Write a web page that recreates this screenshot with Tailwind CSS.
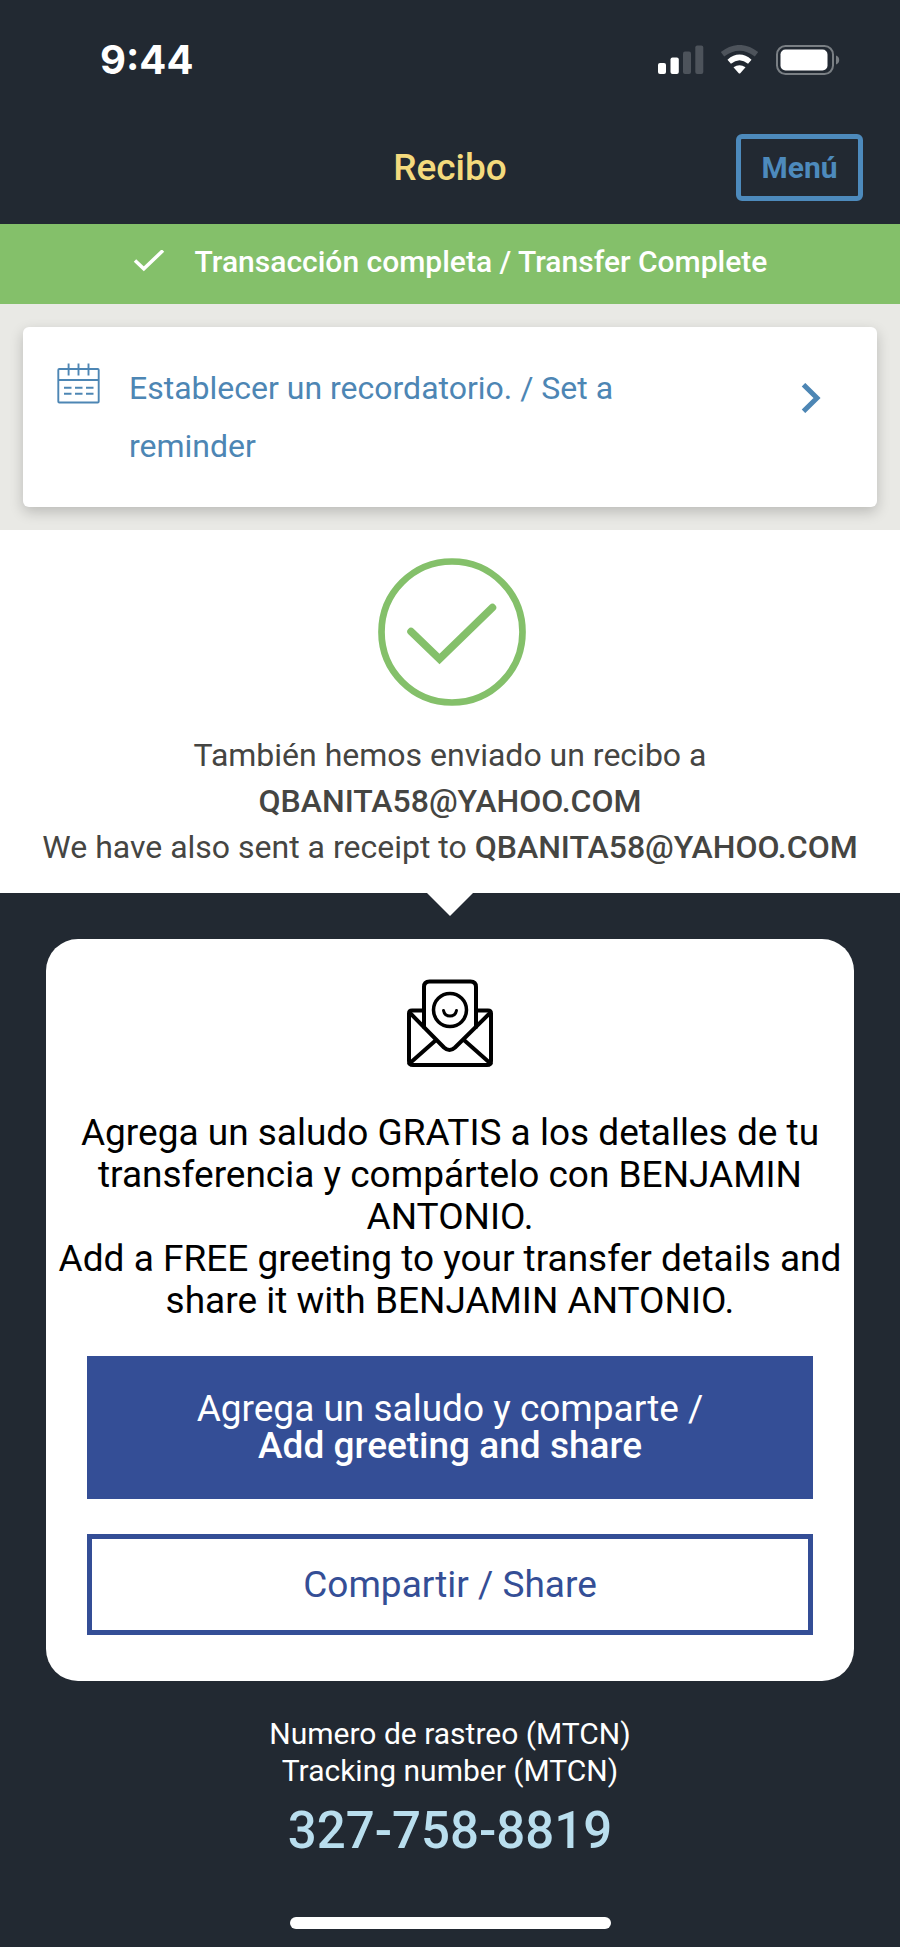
<!DOCTYPE html>
<html lang="es">
<head>
<meta charset="utf-8">
<meta name="viewport" content="width=device-width, initial-scale=1">
<title>Recibo</title>
<script src="https://cdn.jsdelivr.net/npm/@tailwindcss/browser@4"></script>
</head>
<body class="flex min-h-screen flex-col bg-[#222932] font-['Roboto','Liberation_Sans',sans-serif] text-white">
  <!-- Status bar -->
  <div class="flex h-[120px] items-center justify-between pr-[60px] pl-[100px]">
    <span class="font-['Inter','Liberation_Sans',sans-serif] text-[40px] leading-[46px] font-bold">9:44</span>
    <div class="flex items-center">
      <svg class="h-[30px] w-[182px]" viewBox="0 0 182 30" fill="#fff" aria-hidden="true">
        <rect x="0" y="18" width="8" height="11" rx="2"/>
        <rect x="12.500" y="12.500" width="8.300" height="16.500" rx="2"/>
        <rect x="25" y="6.500" width="8" height="22.500" rx="2" fill="#4d535b"/>
        <rect x="37.300" y="0.500" width="8" height="28.500" rx="2" fill="#4d535b"/>
        <path d="M64.500 9.300Q81.500-3.700 98.500 9.300" fill="none" stroke="#4d535b" stroke-width="5.600"/>
        <path d="M71.200 16.700Q81.500 8 91.800 16.700" fill="none" stroke="#fff" stroke-width="5.400"/>
        <path d="M75.500 22.300Q81.500 18 87.500 22.300L82.500 28Q81.500 29 80.500 28Z"/>
        <rect x="119" y="1" width="56" height="28" rx="8.500" fill="none" stroke="#7a7f84" stroke-width="2"/>
        <rect x="122.500" y="4.500" width="47" height="21" rx="5"/>
        <path d="M178 10.500C182.300 12 182.300 18 178 19.500Z" fill="#7a7f84"/>
      </svg>
    </div>
  </div>

  <!-- Title bar -->
  <header class="grid h-[104px] grid-cols-[1fr_auto_1fr] items-start px-[37px] pt-[14px]">
    <span></span>
    <h1 class="pt-3 text-[37px] leading-[44px] font-medium text-[#f4da7d]">Recibo</h1>
    <button type="button" class="h-[67px] w-[127px] justify-self-end rounded-md border-5 border-[#4d8abc] text-[30px] leading-[36px] font-bold text-[#4d8abc]">Menú</button>
  </header>

  <!-- Completion banner -->
  <div class="flex h-20 items-center justify-center gap-[30px] bg-[#84c06a] pb-1 text-[30px] leading-[36px] font-medium">
    <svg class="h-[24px] w-[32px]" viewBox="0 0 32 24" fill="none" stroke="#fff" stroke-width="3.500" aria-hidden="true"><path d="M2 10.500L10.800 18.800L30 0.500"/></svg>
    <span>Transacción completa / Transfer Complete</span>
  </div>

  <!-- Reminder card -->
  <div class="bg-[#e9e9e5] p-[23px]">
    <a href="#" class="flex rounded-md bg-white py-8 pr-14 pl-[34px] text-[#4d86b4] shadow-[0_5px_14px_rgba(0,0,0,0.2)]">
      <svg class="mt-1 h-[42px] w-[43px] shrink-0" viewBox="0 0 43 42" fill="none" stroke="#4d86b4" stroke-width="1.900" aria-hidden="true">
        <rect x="1.300" y="6" width="40.400" height="33.500" rx="1"/>
        <path d="M1.300 17H41.700M11.600 0.500V12.500M21.500 0.500V12.500M31.500 0.500V12.500"/>
        <path d="M7 24.700H14.500M18 24.700H25.500M29 24.700H36.500M7 30.700H14.500M18 30.700H25.500M29 30.700H36.500"/>
      </svg>
      <span class="ml-[29px] flex-1 text-[32px] leading-[58px]">Establecer un recordatorio. / Set a<br>reminder</span>
      <svg class="mt-6 h-[30px] w-[20px] shrink-0" viewBox="0 0 20 30" fill="none" stroke="#4d86b4" stroke-width="5" aria-hidden="true"><path d="M2.500 1.700L16 15L2.500 28.300"/></svg>
    </a>
  </div>

  <!-- Receipt confirmation -->
  <section class="flex flex-col items-center bg-white px-2 pt-7 pb-[23px] text-center text-[#454542]">
    <svg class="h-[148px] w-[152px]" viewBox="0 0 152 148" fill="none" stroke="#84c06a" stroke-linecap="round" aria-hidden="true">
      <circle cx="78" cy="74" r="70.500" stroke-width="6.700"/>
      <path d="M37 73.500L65.500 101L118.500 49.500" stroke-width="7.500"/>
    </svg>
    <p class="mt-[26px] text-[32px] leading-[46px]">También hemos enviado un recibo a<br><span class="font-medium">QBANITA58@YAHOO.COM</span><br>We have also sent a receipt to <span class="font-medium">QBANITA58@YAHOO.COM</span></p>
  </section>
  <svg class="h-[23px] w-[46px] self-center" viewBox="0 0 46 23" fill="#fff" aria-hidden="true"><path d="M0 0H46L23 23Z"/></svg>

  <!-- Greeting card -->
  <section class="mx-[46px] mt-[23px] flex flex-col items-center rounded-[32px] bg-white pt-10 pb-[46px] text-center text-black">
    <svg class="h-[88px] w-[88px]" viewBox="0 0 88 88" fill="none" stroke="#000" stroke-width="4" stroke-linecap="round" stroke-linejoin="round" aria-hidden="true">
      <path d="M18 48V8Q18 2.500 23.500 2.500H64.500Q70 2.500 70 8V48"/>
      <path d="M18 31.500H6Q3 31.500 3 34.500V82Q3 86 7 86H81Q85 86 85 82V34.500Q85 31.500 82 31.500H70"/>
      <path d="M4 34L38 68.500Q43.500 73.500 49 68.500L84 34M3.500 84.500L29.500 61.500M84.500 84.500L58.500 61.500"/>
      <circle cx="44" cy="31" r="16.500" stroke-width="3.500"/>
      <path d="M37.500 31.500Q38.500 37 44 37Q49.500 37 50.500 31.500" stroke-width="3"/>
    </svg>
    <p class="mt-[45px] text-[37px] leading-[42px]">Agrega un saludo GRATIS a los detalles de tu<br>transferencia y compártelo con BENJAMIN<br>ANTONIO.<br>Add a FREE greeting to your transfer details and<br>share it with BENJAMIN ANTONIO.</p>
    <div class="mt-[34px] flex w-full flex-col gap-[35px] px-[41px]">
      <button type="button" class="bg-[#344e96] pt-[34px] pb-[35px] text-[37px] leading-[37px] text-white">Agrega un saludo y comparte /<br><span class="font-medium">Add greeting and share</span></button>
      <button type="button" class="border-5 border-[#344e96] pt-[27px] pb-[27px] text-[37px] leading-[37px] text-[#344e96]">Compartir / Share</button>
    </div>
  </section>

  <!-- Tracking number -->
  <footer class="mt-[34px] flex flex-1 flex-col items-center text-center">
    <p class="text-[30px] leading-[37px]">Numero de rastreo (MTCN)<br>Tracking number (MTCN)</p>
    <p class="mt-3 text-[51px] leading-[60px] font-medium text-[#b9deee]">327-758-8819</p>
    <div class="mt-auto mb-[18px] h-3 w-[321px] rounded-full bg-white"></div>
  </footer>
</body>
</html>
